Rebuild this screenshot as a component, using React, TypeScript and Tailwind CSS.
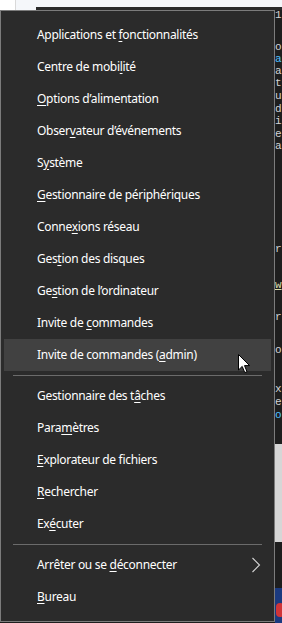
import React from 'react'

type Item = { pre: string; key: string; post: string; active?: boolean; sub?: boolean }

const groupA: Item[] = [
  { pre: 'Applications et ', key: 'f', post: 'onctionnalités' },
  { pre: 'Centre de mobi', key: 'l', post: 'ité' },
  { pre: '', key: 'O', post: 'ptions d’alimentation' },
  { pre: 'Obser', key: 'v', post: 'ateur d’événements' },
  { pre: 'S', key: 'y', post: 'stème' },
  { pre: '', key: 'G', post: 'estionnaire de périphériques' },
  { pre: 'Conne', key: 'x', post: 'ions réseau' },
  { pre: 'Ges', key: 't', post: 'ion des disques' },
  { pre: 'Ge', key: 's', post: 'tion de l’ordinateur' },
  { pre: 'Invite de ', key: 'c', post: 'ommandes' },
  { pre: 'Invite de commandes (', key: 'a', post: 'dmin)', active: true },
]

const groupB: Item[] = [
  { pre: 'Gestionnaire des t', key: 'â', post: 'ches' },
  { pre: 'Para', key: 'm', post: 'ètres' },
  { pre: '', key: 'E', post: 'xplorateur de fichiers' },
  { pre: '', key: 'R', post: 'echercher' },
  { pre: 'Ex', key: 'é', post: 'cuter' },
]

const groupC: Item[] = [
  { pre: 'Arrêter ou se ', key: 'd', post: 'éconnecter', sub: true },
  { pre: '', key: 'B', post: 'ureau' },
]

// bits of the code editor peeking out behind the menu
const codeChars = [
  { ch: '1', top: 'top-[10px]', c: 'text-[#d4d4d4]' },
  { ch: 'o', top: 'top-[42px]', c: 'text-[#d4d4d4]' },
  { ch: 'a', top: 'top-[54px]', c: 'text-[#4fc1ff]' },
  { ch: 'a', top: 'top-[66px]', c: 'text-[#d4d4d4]' },
  { ch: 't', top: 'top-[78px]', c: 'text-[#d4d4d4]' },
  { ch: 'u', top: 'top-[91px]', c: 'text-[#d4d4d4]' },
  { ch: 'd', top: 'top-[104px]', c: 'text-[#d4d4d4]' },
  { ch: 'i', top: 'top-[116px]', c: 'text-[#d4d4d4]' },
  { ch: 'e', top: 'top-[129px]', c: 'text-[#d4d4d4]' },
  { ch: 'a', top: 'top-[141px]', c: 'text-[#d4d4d4]' },
  { ch: 'r', top: 'top-[244px]', c: 'text-[#d4d4d4]' },
  { ch: 'w', top: 'top-[280px]', c: 'text-[#dcdcaa] underline' },
  { ch: 'r', top: 'top-[312px]', c: 'text-[#d4d4d4]' },
  { ch: 'o', top: 'top-[345px]', c: 'text-[#d4d4d4]' },
  { ch: 'x', top: 'top-[384px]', c: 'text-[#d4d4d4]' },
  { ch: 'e', top: 'top-[397px]', c: 'text-[#d4d4d4]' },
  { ch: 'o', top: 'top-[410px]', c: 'text-[#4fc1ff]' },
]

function Row({ item }: { item: Item }) {
  return (
    <div
      className={`mx-[3px] flex h-8 items-center justify-between pl-[33px] pr-[9px] ${
        item.active ? 'bg-[#414141]' : ''
      }`}
    >
      <span className="whitespace-nowrap text-[12px] tracking-[-0.3px] text-white">
        {item.pre}
        <u className="underline-offset-2">{item.key}</u>
        {item.post}
      </span>
      {item.sub && (
        <svg width="10" height="16" viewBox="0 0 10 16" className="mr-[1px]">
          <path d="M1.5 1 L8.5 8 L1.5 15" fill="none" stroke="#d6d6d6" strokeWidth="1.1" />
        </svg>
      )}
    </div>
  )
}

function Separator() {
  return <div className="mx-3 my-[4px] h-px bg-[#6b6b6b]" />
}

export default function App() {
  return (
    <div
      className="relative h-[623px] w-[282px] overflow-hidden bg-[#1e1e1e]"
      style={{ fontFamily: '"Noto Sans", "Open Sans", sans-serif' }}
    >
      {/* window chrome above the menu */}
      <div className="absolute left-0 top-0 flex h-[10px] w-full">
        <div className="w-[15px] bg-white" />
        <div className="w-px bg-[#d9d9d9]" />
        <div className="flex-1 bg-[#f5f7fa]" />
      </div>
      <div className="absolute left-[36px] top-[7px] h-[3px] w-full bg-[#2b2b2b]" />

      {/* editor column on the right */}
      {codeChars.map((c, i) => (
        <span
          key={i}
          className={`absolute left-[275px] font-mono text-[11px] leading-[11px] ${c.top} ${c.c}`}
        >
          {c.ch}
        </span>
      ))}
      <div className="absolute left-[275px] top-[444px] h-[98px] w-[7px] bg-[#d6d6d6]" />
      <div className="absolute left-[275px] top-[588px] h-[35px] w-[7px] bg-[#1b3a80]" />
      <div className="absolute left-[276px] top-[603px] h-[14px] w-[8px] rounded-full bg-[#d13438]" />

      {/* Win+X menu */}
      <div className="absolute left-0 top-[10px] flex h-[612px] w-[275px] flex-col border border-[#7c7c7c] bg-[#2b2b2b] pt-[8px]">
        {groupA.map((it, i) => (
          <Row key={i} item={it} />
        ))}
        <Separator />
        {groupB.map((it, i) => (
          <Row key={i} item={it} />
        ))}
        <Separator />
        {groupC.map((it, i) => (
          <Row key={i} item={it} />
        ))}
      </div>

      {/* mouse pointer */}
      <svg className="absolute left-[238px] top-[354px]" width="13" height="20" viewBox="0 0 13 20">
        <path
          d="M0.5 0.5 L0.5 16 L4.2 12.4 L6.8 18.6 L9 17.7 L6.5 11.6 L11.6 11.6 Z"
          fill="white"
          stroke="black"
          strokeWidth="1"
          strokeLinejoin="miter"
        />
      </svg>
    </div>
  )
}
